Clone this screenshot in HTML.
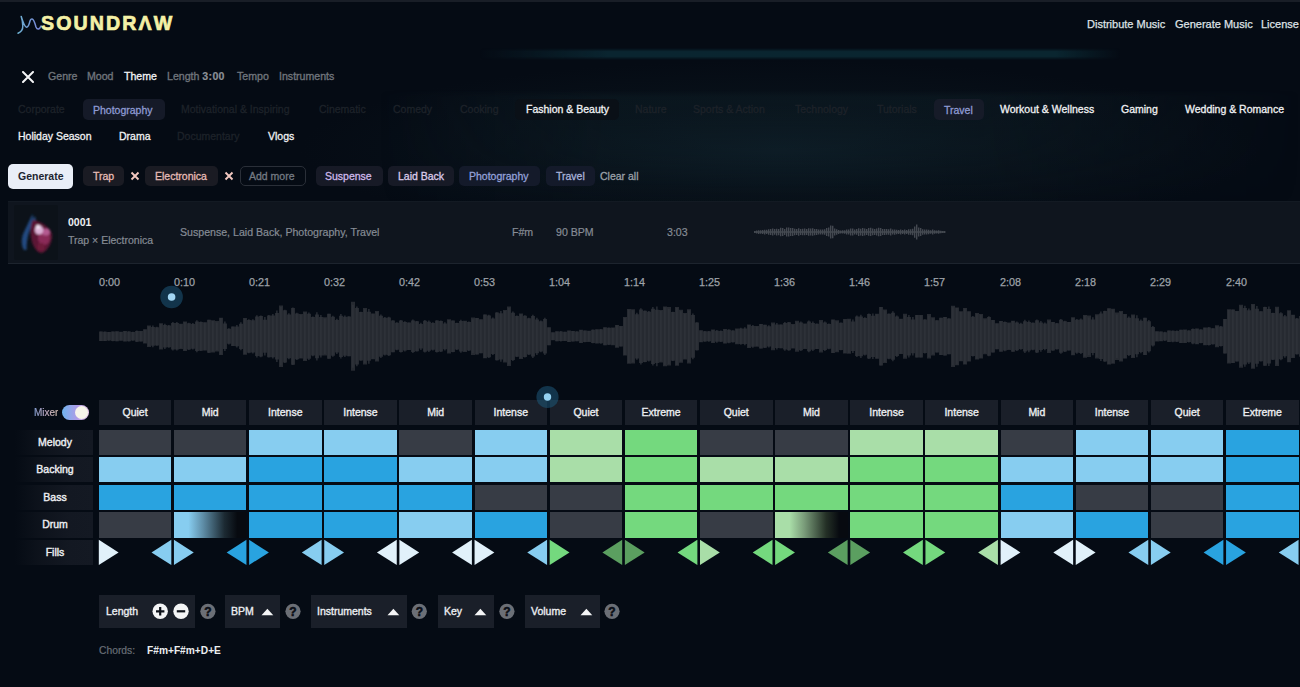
<!DOCTYPE html>
<html><head><meta charset="utf-8">
<style>
*{margin:0;padding:0;box-sizing:border-box}
html,body{width:1300px;height:687px;overflow:hidden;background:#050b14}
body{position:relative;font-family:"Liberation Sans",sans-serif;color:#e8eaee}
.a{position:absolute;white-space:nowrap;line-height:1}
.glow{position:absolute;left:0;top:0;width:1300px;height:687px;pointer-events:none}
.logo{left:41px;top:14.3px;font-size:19.6px;font-weight:bold;color:#f4f0a6;letter-spacing:2.1px;-webkit-text-stroke:0.7px #f4f0a6}
.nav{top:18.8px;font-size:11px;color:#dfe2e6;-webkit-text-stroke:0.25px #dfe2e6}
.tab{top:71px;font-size:10.6px;color:#6f747b;-webkit-text-stroke:0.35px #6f747b}
.tab.on{color:#f2f3f5;-webkit-text-stroke:0.3px #f2f3f5}
.th{top:104px;font-size:10.5px;-webkit-text-stroke:0.3px currentColor}
.th2{top:131px;font-size:10.5px;-webkit-text-stroke:0.3px currentColor}
.dim{color:#1d2229}
.wh{color:#f0f1f3}
.chipbg{position:absolute;border-radius:5px}
.ch{top:171px;font-size:10.5px;-webkit-text-stroke:0.3px currentColor}
.tl{top:276.5px;font-size:10.8px;color:#9ea2a8;-webkit-text-stroke:0.25px #9ea2a8}
.c{position:absolute}
.hd{position:absolute;top:399.7px;width:73px;height:25.2px;background:#1a1f29;color:#eceef1;font-size:10.5px;line-height:25px;text-align:center;-webkit-text-stroke:0.35px #eceef1}
.lbl{position:absolute;left:15px;width:78px;height:25.2px;background:linear-gradient(90deg,rgba(18,23,32,0) 0%,rgba(18,23,32,.6) 30%,#131822 70%,#141923 100%);padding-left:2px;color:#eceef1;font-size:10.5px;line-height:25px;text-align:center;-webkit-text-stroke:0.4px #eceef1}
.box{position:absolute;top:595px;height:33px;background:#1a1f29}
.bt{top:606px;font-size:10.5px;color:#eceef1;-webkit-text-stroke:0.35px #eceef1}
</style></head><body>
<div class="glow" style="background:radial-gradient(ellipse 480px 90px at 780px 150px,rgba(16,34,44,.75) 0%,rgba(12,24,32,.45) 50%,rgba(6,10,18,0) 100%)"></div>
<div style="position:absolute;left:380px;top:90px;width:920px;height:120px;background:linear-gradient(180deg,rgba(14,30,38,0) 0px,rgba(14,30,38,.45) 7px,rgba(14,30,38,.3) 60px,rgba(14,30,38,0) 120px);-webkit-mask-image:linear-gradient(90deg,transparent 0%,#000 25%,#000 65%,transparent 100%)"></div>
<svg class="glow" width="1300" height="687">
<defs>
<linearGradient id="gl" x1="0" x2="1"><stop offset="0" stop-color="#0a1f28" stop-opacity="0"/><stop offset="0.25" stop-color="#0b2630"/><stop offset="0.8" stop-color="#0b2630"/><stop offset="1" stop-color="#0a1f28" stop-opacity="0"/></linearGradient>
<radialGradient id="rg" cx="0.5" cy="0.5" r="0.5"><stop offset="0" stop-color="#0d1e27" stop-opacity="0.9"/><stop offset="1" stop-color="#060a12" stop-opacity="0"/></radialGradient>
<linearGradient id="wv" x1="0" x2="1"><stop offset="0" stop-color="#6cb0d0"/><stop offset="1" stop-color="#7a84d8"/></linearGradient>
<linearGradient id="tg" x1="0" x2="1"><stop offset="0" stop-color="#6fb6f0"/><stop offset="0.55" stop-color="#b59ae8"/><stop offset="1" stop-color="#e8c8e8"/></linearGradient>
</defs>
<filter id="gb" x="-20%" y="-200%" width="140%" height="500%"><feGaussianBlur stdDeviation="2.2"/></filter>
<filter id="gb2" x="-50%" y="-50%" width="200%" height="200%"><feGaussianBlur stdDeviation="25"/></filter>
</svg>

<div style="position:absolute;left:480px;top:48px;width:640px;height:12px;background:linear-gradient(90deg,rgba(10,37,48,0) 0%,rgba(10,37,48,.6) 12%,#0a2530 20%,#0a2630 90%,rgba(10,37,48,0) 100%);-webkit-mask-image:linear-gradient(180deg,transparent 0%,#000 30%,#000 70%,transparent 100%)"></div>
<div class="c" style="left:0;top:0;width:1300px;height:1.5px;background:#191e27"></div>
<!-- logo -->
<svg class="a" style="left:0;top:0" width="60" height="45">
<path d="M18 33.3 Q23 31 22.8 26 Q22.5 20 21.2 16.5 Q24.5 27 26.5 27.2 Q28.5 27.4 30 21 Q31 18.5 32.2 19 Q34 19.5 36 27 Q37 29.5 38.6 29 Q40 28.5 41 26" fill="none" stroke="url(#wv)" stroke-width="1.5" stroke-linecap="round" stroke-linejoin="round"/>
</svg>
<div class="a logo">SOUNDRΛW</div>

<div class="a nav" style="left:1087px">Distribute Music</div>
<div class="a nav" style="left:1175px">Generate Music</div>
<div class="a nav" style="left:1261px">License</div>

<!-- tabs -->
<svg class="a" style="left:22px;top:71px" width="12" height="12"><path d="M1 1L11 11M11 1L1 11" stroke="#f4f5f6" stroke-width="2" stroke-linecap="round"/></svg>
<div class="a tab" style="left:48px">Genre</div>
<div class="a tab" style="left:87px">Mood</div>
<div class="a tab on" style="left:124px">Theme</div>
<div class="a tab" style="left:167px">Length <b style="color:#8c9097;-webkit-text-stroke:0.2px #8c9097;letter-spacing:0.3px">3:00</b></div>
<div class="a tab" style="left:237px">Tempo</div>
<div class="a tab" style="left:279px">Instruments</div>

<!-- theme chips -->
<div class="chipbg" style="left:83px;top:99px;width:82px;height:21px;background:#151a28"></div>
<div class="chipbg" style="left:515px;top:99px;width:104px;height:21px;background:#0a1017"></div>
<div class="chipbg" style="left:934px;top:99px;width:50px;height:21px;background:#161b28"></div>
<div class="a th dim" style="left:18px">Corporate</div>
<div class="a th" style="left:93px;top:104.5px;color:#8e9ad2">Photography</div>
<div class="a th dim" style="left:181px">Motivational &amp; Inspiring</div>
<div class="a th dim" style="left:319px">Cinematic</div>
<div class="a th dim" style="left:393px">Comedy</div>
<div class="a th dim" style="left:460px">Cooking</div>
<div class="a th wh" style="left:526px">Fashion &amp; Beauty</div>
<div class="a th dim" style="left:635px">Nature</div>
<div class="a th dim" style="left:693px">Sports &amp; Action</div>
<div class="a th dim" style="left:795px">Technology</div>
<div class="a th dim" style="left:877px">Tutorials</div>
<div class="a th" style="left:944px;top:104.5px;color:#8e9ad2">Travel</div>
<div class="a th wh" style="left:1000px">Workout &amp; Wellness</div>
<div class="a th wh" style="left:1121px">Gaming</div>
<div class="a th wh" style="left:1185px">Wedding &amp; Romance</div>
<div class="a th2 wh" style="left:18px">Holiday Season</div>
<div class="a th2 wh" style="left:119px">Drama</div>
<div class="a th2 dim" style="left:177px">Documentary</div>
<div class="a th2 wh" style="left:268px">Vlogs</div>

<!-- chips -->
<div class="chipbg" style="left:8px;top:164px;width:65px;height:25px;background:#e9eef7;border-radius:5px"></div>
<div class="a ch" style="left:18px;color:#1c2430;font-weight:bold;-webkit-text-stroke:0">Generate</div>
<div class="chipbg" style="left:83px;top:166px;width:41px;height:20px;background:#1a1b23"></div>
<div class="a ch" style="left:93px;color:#e6bcb6">Trap</div>
<svg class="a" style="left:130px;top:171px" width="10" height="10"><path d="M1.5 1.5L8.5 8.5M8.5 1.5L1.5 8.5" stroke="#f2c8c0" stroke-width="1.9"/></svg>
<div class="chipbg" style="left:145px;top:166px;width:73px;height:20px;background:#1a1b23"></div>
<div class="a ch" style="left:155px;color:#e6bcb6">Electronica</div>
<svg class="a" style="left:224px;top:171px" width="10" height="10"><path d="M1.5 1.5L8.5 8.5M8.5 1.5L1.5 8.5" stroke="#f2c8c0" stroke-width="1.9"/></svg>
<div class="chipbg" style="left:240px;top:166px;width:66px;height:20px;border:1px solid #2a2f38"></div>
<div class="a ch" style="left:249px;color:#747a83">Add more</div>
<div class="chipbg" style="left:316px;top:166px;width:67px;height:20px;background:#171a26"></div>
<div class="a ch" style="left:325px;color:#cdb8ea">Suspense</div>
<div class="chipbg" style="left:388px;top:166px;width:66px;height:20px;background:#171a26"></div>
<div class="a ch" style="left:398px;color:#dccbea">Laid Back</div>
<div class="chipbg" style="left:459px;top:166px;width:81px;height:20px;background:#141a2a"></div>
<div class="a ch" style="left:469px;color:#93a0d8">Photography</div>
<div class="chipbg" style="left:546px;top:166px;width:49px;height:20px;background:#141a2a"></div>
<div class="a ch" style="left:556px;color:#a8b2da">Travel</div>
<div class="a ch" style="left:600px;color:#9aa0a8">Clear all</div>

<!-- track card -->
<div class="c" style="left:8px;top:201px;width:1292px;height:63px;background:#0f151e;border-top:1px solid #131a23;border-bottom:1px solid #1d242e"></div>
<div class="c" style="left:14px;top:205px;width:44px;height:55px;background:#0c1219;border-radius:2px"></div>
<svg class="a" style="left:14px;top:207px" width="50" height="50">
<defs><filter id="bl" x="-50%" y="-50%" width="200%" height="200%"><feGaussianBlur stdDeviation="1.3"/></filter></defs>
<g filter="url(#bl)">
<path d="M10 43 C6.5 37 7.5 29 10.5 24 C12.5 20 15.5 13 18.5 7 C19.5 13 17.5 19 15.5 24 C13.5 29 12.5 36 12.5 43Z" fill="#234a80"/>
<path d="M16.5 22 C17.5 17 19 12 21 9 C22 14 21.5 19 20 23Z" fill="#2c5592"/>
<path d="M19 13 C26 14 36 20 38 27 C39 34 34 44 28 46 C22 46 18 38 17 30 C16 22 17 16 19 13Z" fill="#5c1634"/>
<ellipse cx="30" cy="31" rx="6" ry="7" fill="#8a2c58"/>
<ellipse cx="32" cy="25" rx="4" ry="3.5" fill="#b45a90"/>
<ellipse cx="25" cy="23" rx="4.2" ry="4.5" fill="#dcb0d6"/>
<ellipse cx="24" cy="20" rx="2.2" ry="2.2" fill="#eee0f0"/>
<ellipse cx="27" cy="40" rx="4" ry="4" fill="#6e1a3a"/>
</g>
</svg>
<div class="a" style="left:68px;top:217px;font-size:10.5px;font-weight:bold;color:#eceef1">0001</div>
<div class="a" style="left:68px;top:234.5px;font-size:10.5px;color:#868c95;-webkit-text-stroke:0.2px #868c95">Trap × Electronica</div>
<div class="a" style="left:180px;top:226.5px;font-size:10.6px;color:#868c95;-webkit-text-stroke:0.2px #868c95">Suspense, Laid Back, Photography, Travel</div>
<div class="a" style="left:512px;top:226.5px;font-size:10.6px;color:#868c95;-webkit-text-stroke:0.2px #868c95">F#m</div>
<div class="a" style="left:556px;top:226.5px;font-size:10.6px;color:#868c95;-webkit-text-stroke:0.2px #868c95">90 BPM</div>
<div class="a" style="left:667px;top:226.5px;font-size:10.6px;color:#868c95;-webkit-text-stroke:0.2px #868c95">3:03</div>
<svg class="a" style="left:0;top:0" width="1300" height="687"><path d="M754 230.9h1.4v2.2h-1.4zM756 230.6h1.4v2.8h-1.4zM758 230.2h1.4v3.7h-1.4zM760 230.2h1.4v3.6h-1.4zM762 230.0h1.4v4.1h-1.4zM764 229.7h1.4v4.7h-1.4zM766 229.8h1.4v4.3h-1.4zM768 229.3h1.4v5.4h-1.4zM770 228.9h1.4v6.2h-1.4zM772 228.5h1.4v7.1h-1.4zM774 229.1h1.4v5.7h-1.4zM776 228.7h1.4v6.7h-1.4zM778 228.9h1.4v6.3h-1.4zM780 227.8h1.4v8.4h-1.4zM782 228.0h1.4v8.1h-1.4zM784 228.9h1.4v6.1h-1.4zM786 227.5h1.4v8.9h-1.4zM788 227.6h1.4v8.9h-1.4zM790 228.0h1.4v8.0h-1.4zM792 228.1h1.4v7.8h-1.4zM794 228.8h1.4v6.5h-1.4zM796 229.0h1.4v6.0h-1.4zM798 228.2h1.4v7.6h-1.4zM800 228.9h1.4v6.2h-1.4zM802 228.7h1.4v6.6h-1.4zM804 228.6h1.4v6.7h-1.4zM806 229.0h1.4v6.1h-1.4zM808 228.3h1.4v7.4h-1.4zM810 228.5h1.4v6.9h-1.4zM812 228.2h1.4v7.6h-1.4zM814 228.9h1.4v6.3h-1.4zM816 229.0h1.4v6.0h-1.4zM818 229.5h1.4v5.1h-1.4zM820 229.6h1.4v4.8h-1.4zM822 229.4h1.4v5.2h-1.4zM824 229.3h1.4v5.5h-1.4zM826 228.0h1.4v8.1h-1.4zM828 227.5h1.4v9.0h-1.4zM830 225.5h1.4v13.1h-1.4zM832 225.8h1.4v12.5h-1.4zM834 228.5h1.4v6.9h-1.4zM836 229.3h1.4v5.4h-1.4zM838 229.9h1.4v4.1h-1.4zM840 230.4h1.4v3.1h-1.4zM842 230.3h1.4v3.3h-1.4zM844 230.2h1.4v3.6h-1.4zM846 229.4h1.4v5.1h-1.4zM848 229.5h1.4v5.0h-1.4zM850 228.5h1.4v7.1h-1.4zM852 228.5h1.4v7.0h-1.4zM854 229.5h1.4v5.0h-1.4zM856 229.1h1.4v5.7h-1.4zM858 228.2h1.4v7.7h-1.4zM860 228.7h1.4v6.7h-1.4zM862 227.9h1.4v8.2h-1.4zM864 228.6h1.4v6.8h-1.4zM866 229.0h1.4v6.0h-1.4zM868 228.1h1.4v7.7h-1.4zM870 227.8h1.4v8.3h-1.4zM872 228.6h1.4v6.7h-1.4zM874 228.9h1.4v6.1h-1.4zM876 228.6h1.4v6.8h-1.4zM878 227.8h1.4v8.5h-1.4zM880 228.1h1.4v7.8h-1.4zM882 229.0h1.4v5.9h-1.4zM884 228.9h1.4v6.2h-1.4zM886 229.1h1.4v5.7h-1.4zM888 229.3h1.4v5.4h-1.4zM890 228.6h1.4v6.8h-1.4zM892 229.6h1.4v4.9h-1.4zM894 229.4h1.4v5.3h-1.4zM896 229.7h1.4v4.6h-1.4zM898 230.0h1.4v3.9h-1.4zM900 229.5h1.4v4.9h-1.4zM902 230.1h1.4v3.8h-1.4zM904 229.6h1.4v4.8h-1.4zM906 229.9h1.4v4.1h-1.4zM908 229.3h1.4v5.4h-1.4zM910 229.2h1.4v5.6h-1.4zM912 228.8h1.4v6.5h-1.4zM914 226.4h1.4v11.3h-1.4zM916 224.4h1.4v15.1h-1.4zM918 227.6h1.4v8.8h-1.4zM920 227.9h1.4v8.2h-1.4zM922 229.3h1.4v5.5h-1.4zM924 229.4h1.4v5.1h-1.4zM926 229.4h1.4v5.1h-1.4zM928 229.7h1.4v4.6h-1.4zM930 230.2h1.4v3.5h-1.4zM932 229.6h1.4v4.8h-1.4zM934 230.3h1.4v3.4h-1.4zM936 230.4h1.4v3.2h-1.4zM938 230.2h1.4v3.5h-1.4zM940 230.7h1.4v2.6h-1.4zM942 230.9h1.4v2.2h-1.4zM944 231.0h1.4v2.0h-1.4zM754 231.3h191v1.4h-191z" fill="#444951"/></svg>

<!-- timeline -->
<div class="a tl" style="left:99px">0:00</div>
<div class="a tl" style="left:174px">0:10</div>
<div class="a tl" style="left:249px">0:21</div>
<div class="a tl" style="left:324px">0:32</div>
<div class="a tl" style="left:399px">0:42</div>
<div class="a tl" style="left:474px">0:53</div>
<div class="a tl" style="left:549px">1:04</div>
<div class="a tl" style="left:624px">1:14</div>
<div class="a tl" style="left:699px">1:25</div>
<div class="a tl" style="left:774px">1:36</div>
<div class="a tl" style="left:849px">1:46</div>
<div class="a tl" style="left:924px">1:57</div>
<div class="a tl" style="left:1000px">2:08</div>
<div class="a tl" style="left:1075px">2:18</div>
<div class="a tl" style="left:1150px">2:29</div>
<div class="a tl" style="left:1226px">2:40</div>

<svg class="a" style="left:0;top:0" width="1300" height="687">
<path d="M99 331.4h4v9.7h-4zM103 331.7h4v9.2h-4zM107 332.1h4v8.4h-4zM111 331.6h4v9.4h-4zM115 331.3h4v9.9h-4zM119 331.8h4v9.0h-4zM123 331.0h4v10.6h-4zM127 331.4h4v9.9h-4zM131 332.1h4v8.3h-4zM135 330.9h4v10.9h-4zM139 330.9h4v10.7h-4zM143 329.2h4v14.3h-4zM147 325.5h4v21.5h-4zM151 327.0h4v18.7h-4zM155 327.2h4v18.2h-4zM159 323.2h4v26.2h-4zM163 325.1h4v22.4h-4zM167 325.4h4v21.8h-4zM171 323.1h4v26.5h-4zM175 322.9h4v26.7h-4zM179 323.7h4v25.2h-4zM183 321.6h4v29.3h-4zM187 323.2h4v26.3h-4zM191 324.0h4v24.7h-4zM195 321.5h4v29.6h-4zM199 321.9h4v28.8h-4zM203 322.2h4v28.3h-4zM207 319.8h4v32.9h-4zM211 320.2h4v32.2h-4zM215 321.0h4v30.6h-4zM219 317.8h4v37.1h-4zM223 323.5h4v25.6h-4zM227 328.7h4v15.1h-4zM231 326.6h4v19.4h-4zM235 326.5h4v19.7h-4zM239 323.8h4v25.1h-4zM243 317.9h4v36.9h-4zM247 319.9h4v32.8h-4zM251 320.2h4v32.2h-4zM255 316.6h4v39.4h-4zM259 316.1h4v40.4h-4zM263 319.8h4v33.0h-4zM267 315.4h4v41.8h-4zM271 315.4h4v41.8h-4zM275 313.1h4v46.4h-4zM279 305.5h4v61.6h-4zM283 310.2h4v52.3h-4zM287 314.5h4v43.7h-4zM291 307.9h4v56.8h-4zM295 313.4h4v45.9h-4zM299 313.9h4v44.7h-4zM303 311.6h4v49.5h-4zM307 313.7h4v45.1h-4zM311 316.9h4v38.7h-4zM315 314.4h4v43.8h-4zM319 317.0h4v38.6h-4zM323 317.3h4v38.1h-4zM327 313.8h4v45.0h-4zM331 316.7h4v39.1h-4zM335 320.1h4v32.4h-4zM339 315.7h4v41.2h-4zM343 316.7h4v39.1h-4zM347 316.4h4v39.8h-4zM351 301.7h4v69.1h-4zM355 308.1h4v56.3h-4zM359 312.0h4v48.6h-4zM363 307.9h4v56.7h-4zM367 311.7h4v49.1h-4zM371 313.4h4v45.9h-4zM375 311.1h4v50.4h-4zM379 315.8h4v41.0h-4zM383 317.8h4v37.0h-4zM387 317.4h4v37.8h-4zM391 320.5h4v31.7h-4zM395 322.8h4v26.9h-4zM399 320.5h4v31.6h-4zM403 322.1h4v28.3h-4zM407 322.6h4v27.3h-4zM411 320.6h4v31.3h-4zM415 321.3h4v29.9h-4zM419 324.1h4v24.4h-4zM423 320.7h4v31.1h-4zM427 321.7h4v29.1h-4zM431 322.9h4v26.8h-4zM435 320.5h4v31.6h-4zM439 321.1h4v30.3h-4zM443 323.5h4v25.7h-4zM447 319.3h4v34.1h-4zM451 320.6h4v31.3h-4zM455 323.1h4v26.3h-4zM459 320.9h4v30.7h-4zM463 320.7h4v31.2h-4zM467 322.1h4v28.4h-4zM471 317.5h4v37.5h-4zM475 318.1h4v36.4h-4zM479 319.3h4v33.9h-4zM483 314.5h4v43.7h-4zM487 315.5h4v41.7h-4zM491 318.6h4v35.4h-4zM495 312.4h4v47.8h-4zM499 313.2h4v46.2h-4zM503 309.9h4v52.7h-4zM507 306.6h4v59.3h-4zM511 312.8h4v47.1h-4zM515 315.9h4v40.8h-4zM519 313.6h4v45.4h-4zM523 315.7h4v41.2h-4zM527 318.2h4v36.3h-4zM531 316.1h4v40.4h-4zM535 319.4h4v33.8h-4zM539 321.2h4v30.2h-4zM543 319.1h4v34.5h-4zM547 327.3h4v17.9h-4zM551 332.3h4v8.0h-4zM555 331.2h4v10.1h-4zM559 331.5h4v9.6h-4zM563 331.7h4v9.2h-4zM567 330.4h4v11.7h-4zM571 331.1h4v10.3h-4zM575 331.4h4v9.9h-4zM579 329.7h4v13.2h-4zM583 330.4h4v11.7h-4zM587 330.7h4v11.3h-4zM591 329.7h4v13.2h-4zM595 329.2h4v14.2h-4zM599 329.3h4v14.0h-4zM603 327.3h4v18.0h-4zM607 327.8h4v16.9h-4zM611 327.4h4v17.8h-4zM615 324.9h4v22.8h-4zM619 326.0h4v20.5h-4zM623 317.0h4v38.6h-4zM627 309.0h4v54.7h-4zM631 309.2h4v54.2h-4zM635 314.2h4v44.2h-4zM639 309.6h4v53.4h-4zM643 310.7h4v51.2h-4zM647 311.7h4v49.1h-4zM651 308.8h4v55.1h-4zM655 309.7h4v53.2h-4zM659 310.0h4v52.5h-4zM663 306.4h4v59.8h-4zM667 306.9h4v58.7h-4zM671 312.0h4v48.7h-4zM675 306.9h4v58.9h-4zM679 309.8h4v52.9h-4zM683 313.0h4v46.5h-4zM687 309.3h4v54.1h-4zM691 314.9h4v42.8h-4zM695 322.5h4v27.7h-4zM699 330.3h4v11.9h-4zM703 331.3h4v10.1h-4zM707 331.3h4v9.9h-4zM711 329.6h4v13.4h-4zM715 330.8h4v11.0h-4zM719 330.9h4v10.9h-4zM723 329.1h4v14.3h-4zM727 329.8h4v12.9h-4zM731 330.4h4v11.8h-4zM735 328.4h4v15.9h-4zM739 328.6h4v15.4h-4zM743 328.5h4v15.6h-4zM747 324.5h4v23.6h-4zM751 326.0h4v20.7h-4zM755 325.9h4v20.9h-4zM759 323.9h4v24.7h-4zM763 324.8h4v23.0h-4zM767 326.3h4v20.1h-4zM771 322.4h4v27.9h-4zM775 324.4h4v23.7h-4zM779 324.5h4v23.7h-4zM783 323.0h4v26.5h-4zM787 322.3h4v28.0h-4zM791 324.1h4v24.5h-4zM795 320.7h4v31.1h-4zM799 322.4h4v27.8h-4zM803 323.6h4v25.5h-4zM807 321.4h4v29.8h-4zM811 322.9h4v26.8h-4zM815 323.7h4v25.3h-4zM819 320.1h4v32.4h-4zM823 322.5h4v27.5h-4zM827 323.9h4v24.9h-4zM831 319.6h4v33.4h-4zM835 320.3h4v31.9h-4zM839 322.7h4v27.2h-4zM843 319.0h4v34.6h-4zM847 318.8h4v35.0h-4zM851 321.5h4v29.6h-4zM855 316.5h4v39.5h-4zM859 316.4h4v39.9h-4zM863 317.9h4v36.9h-4zM867 314.1h4v44.4h-4zM871 315.8h4v41.1h-4zM875 313.8h4v44.9h-4zM879 307.1h4v58.5h-4zM883 309.4h4v53.7h-4zM887 313.8h4v45.0h-4zM891 312.8h4v46.9h-4zM895 316.6h4v39.5h-4zM899 318.7h4v35.2h-4zM903 313.8h4v45.0h-4zM907 317.0h4v38.6h-4zM911 319.4h4v33.9h-4zM915 315.1h4v42.3h-4zM919 315.0h4v42.6h-4zM923 319.6h4v33.4h-4zM927 314.1h4v44.4h-4zM931 317.2h4v38.2h-4zM935 320.2h4v32.3h-4zM939 317.7h4v37.2h-4zM943 317.0h4v38.5h-4zM947 318.4h4v35.9h-4zM951 305.7h4v61.3h-4zM955 307.5h4v57.7h-4zM959 311.3h4v50.0h-4zM963 307.9h4v56.7h-4zM967 311.2h4v50.3h-4zM971 316.8h4v39.1h-4zM975 313.0h4v46.5h-4zM979 314.1h4v44.3h-4zM983 318.2h4v36.1h-4zM987 316.9h4v38.8h-4zM991 320.1h4v32.4h-4zM995 323.2h4v26.1h-4zM999 321.0h4v30.7h-4zM1003 321.9h4v28.7h-4zM1007 322.4h4v27.7h-4zM1011 320.7h4v31.1h-4zM1015 322.4h4v27.8h-4zM1019 323.7h4v25.2h-4zM1023 321.3h4v30.1h-4zM1027 321.9h4v28.7h-4zM1031 322.8h4v27.0h-4zM1035 320.2h4v32.2h-4zM1039 322.5h4v27.6h-4zM1043 323.6h4v25.5h-4zM1047 319.6h4v33.5h-4zM1051 322.1h4v28.4h-4zM1055 323.3h4v25.9h-4zM1059 319.7h4v33.1h-4zM1063 321.2h4v30.2h-4zM1067 322.1h4v28.4h-4zM1071 317.3h4v38.0h-4zM1075 319.7h4v33.1h-4zM1079 319.6h4v33.5h-4zM1083 315.0h4v42.7h-4zM1087 315.5h4v41.5h-4zM1091 319.6h4v33.3h-4zM1095 314.2h4v44.2h-4zM1099 313.5h4v45.5h-4zM1103 311.0h4v50.6h-4zM1107 308.3h4v56.1h-4zM1111 308.8h4v54.9h-4zM1115 312.6h4v47.4h-4zM1119 311.1h4v50.3h-4zM1123 314.0h4v44.5h-4zM1127 317.7h4v37.2h-4zM1131 314.4h4v43.7h-4zM1135 318.3h4v36.0h-4zM1139 320.7h4v31.2h-4zM1143 317.7h4v37.3h-4zM1147 321.2h4v30.1h-4zM1151 327.0h4v18.6h-4zM1155 331.2h4v10.3h-4zM1159 331.4h4v9.8h-4zM1163 332.2h4v8.3h-4zM1167 330.5h4v11.6h-4zM1171 330.8h4v10.9h-4zM1175 330.9h4v10.9h-4zM1179 329.7h4v13.2h-4zM1183 329.5h4v13.5h-4zM1187 330.6h4v11.4h-4zM1191 328.9h4v14.7h-4zM1195 328.4h4v15.8h-4zM1199 329.5h4v13.5h-4zM1203 327.4h4v17.8h-4zM1207 327.6h4v17.5h-4zM1211 328.3h4v16.0h-4zM1215 325.3h4v22.0h-4zM1219 326.6h4v19.3h-4zM1223 319.1h4v34.4h-4zM1227 309.3h4v54.1h-4zM1231 309.6h4v53.3h-4zM1235 311.0h4v50.5h-4zM1239 304.8h4v63.0h-4zM1243 308.1h4v56.4h-4zM1247 310.2h4v52.2h-4zM1251 303.9h4v64.8h-4zM1255 308.8h4v54.9h-4zM1259 311.2h4v50.1h-4zM1263 307.0h4v58.7h-4zM1267 309.1h4v54.3h-4zM1271 312.9h4v46.9h-4zM1275 306.7h4v59.2h-4zM1279 313.3h4v45.9h-4zM1283 316.3h4v39.9h-4zM1287 310.3h4v52.0h-4zM1291 314.7h4v43.2h-4zM1295 318.5h4v35.7h-4zM1299 315.9h4v40.8h-4z" fill="#262a31"/><path d="M100.3 331.5h1.2v9.6h-1.2zM104.3 331.5h1.2v9.6h-1.2zM108.3 331.9h1.2v8.8h-1.2zM112.3 331.4h1.2v9.9h-1.2zM116.3 331.4h1.2v9.8h-1.2zM120.3 332.1h1.2v8.4h-1.2zM124.3 331.2h1.2v10.1h-1.2zM128.3 331.2h1.2v10.2h-1.2zM132.3 331.8h1.2v8.9h-1.2zM136.3 330.5h1.2v11.6h-1.2zM140.3 331.2h1.2v10.2h-1.2zM144.3 329.6h1.2v13.5h-1.2zM148.3 326.4h1.2v19.8h-1.2zM152.3 325.4h1.2v21.8h-1.2zM156.3 326.8h1.2v18.9h-1.2zM160.3 323.8h1.2v25.0h-1.2zM164.3 323.7h1.2v25.2h-1.2zM168.3 324.9h1.2v22.8h-1.2zM172.3 322.0h1.2v28.6h-1.2zM176.3 322.1h1.2v28.3h-1.2zM180.3 324.3h1.2v24.0h-1.2zM184.3 322.2h1.2v28.2h-1.2zM188.3 322.8h1.2v27.1h-1.2zM192.3 323.0h1.2v26.5h-1.2zM196.3 320.3h1.2v31.9h-1.2zM200.3 321.4h1.2v29.7h-1.2zM204.3 322.4h1.2v27.8h-1.2zM208.3 319.8h1.2v33.1h-1.2zM212.3 321.0h1.2v30.5h-1.2zM216.3 322.4h1.2v27.8h-1.2zM220.3 318.0h1.2v36.5h-1.2zM224.3 321.6h1.2v29.4h-1.2zM228.3 328.3h1.2v16.1h-1.2zM232.3 326.6h1.2v19.3h-1.2zM236.3 325.0h1.2v22.5h-1.2zM240.3 322.3h1.2v27.9h-1.2zM244.3 318.4h1.2v35.8h-1.2zM248.3 319.3h1.2v34.0h-1.2zM252.3 319.2h1.2v34.2h-1.2zM256.3 315.2h1.2v42.2h-1.2zM260.3 315.5h1.2v41.7h-1.2zM264.3 317.0h1.2v38.6h-1.2zM268.3 314.9h1.2v42.7h-1.2zM272.3 314.0h1.2v44.6h-1.2zM276.3 310.5h1.2v51.6h-1.2zM280.3 307.0h1.2v58.6h-1.2zM284.3 309.7h1.2v53.2h-1.2zM288.3 313.3h1.2v46.0h-1.2zM292.3 307.6h1.2v57.5h-1.2zM296.3 312.8h1.2v47.1h-1.2zM300.3 314.7h1.2v43.2h-1.2zM304.3 312.5h1.2v47.6h-1.2zM308.3 312.4h1.2v47.7h-1.2zM312.3 316.4h1.2v39.8h-1.2zM316.3 312.2h1.2v48.2h-1.2zM320.3 314.9h1.2v42.7h-1.2zM324.3 318.4h1.2v35.7h-1.2zM328.3 313.8h1.2v45.0h-1.2zM332.3 315.8h1.2v41.0h-1.2zM336.3 318.7h1.2v35.2h-1.2zM340.3 314.1h1.2v44.4h-1.2zM344.3 315.6h1.2v41.4h-1.2zM348.3 316.3h1.2v39.9h-1.2zM352.3 304.8h1.2v62.9h-1.2zM356.3 306.4h1.2v59.9h-1.2zM360.3 311.8h1.2v49.0h-1.2zM364.3 309.3h1.2v53.9h-1.2zM368.3 309.0h1.2v54.7h-1.2zM372.3 313.8h1.2v45.0h-1.2zM376.3 312.1h1.2v48.5h-1.2zM380.3 314.4h1.2v43.7h-1.2zM384.3 317.1h1.2v38.3h-1.2zM388.3 316.7h1.2v39.2h-1.2zM392.3 320.2h1.2v32.1h-1.2zM396.3 322.3h1.2v28.0h-1.2zM400.3 320.1h1.2v32.4h-1.2zM404.3 321.2h1.2v30.2h-1.2zM408.3 322.4h1.2v27.7h-1.2zM412.3 319.6h1.2v33.4h-1.2zM416.3 321.0h1.2v30.5h-1.2zM420.3 322.7h1.2v27.3h-1.2zM424.3 320.1h1.2v32.3h-1.2zM428.3 320.6h1.2v31.4h-1.2zM432.3 322.3h1.2v28.1h-1.2zM436.3 320.2h1.2v32.2h-1.2zM440.3 320.6h1.2v31.4h-1.2zM444.3 322.2h1.2v28.2h-1.2zM448.3 320.1h1.2v32.4h-1.2zM452.3 320.4h1.2v31.9h-1.2zM456.3 322.7h1.2v27.2h-1.2zM460.3 319.8h1.2v33.0h-1.2zM464.3 321.2h1.2v30.1h-1.2zM468.3 321.6h1.2v29.3h-1.2zM472.3 319.2h1.2v34.1h-1.2zM476.3 318.1h1.2v36.4h-1.2zM480.3 319.4h1.2v33.8h-1.2zM484.3 314.6h1.2v43.4h-1.2zM488.3 314.7h1.2v43.3h-1.2zM492.3 317.5h1.2v37.6h-1.2zM496.3 312.2h1.2v48.2h-1.2zM500.3 310.9h1.2v50.9h-1.2zM504.3 311.1h1.2v50.4h-1.2zM508.3 308.1h1.2v56.4h-1.2zM512.3 311.5h1.2v49.6h-1.2zM516.3 315.5h1.2v41.5h-1.2zM520.3 314.3h1.2v43.9h-1.2zM524.3 315.3h1.2v42.1h-1.2zM528.3 317.7h1.2v37.2h-1.2zM532.3 314.7h1.2v43.2h-1.2zM536.3 317.7h1.2v37.2h-1.2zM540.3 320.4h1.2v31.8h-1.2zM544.3 317.7h1.2v37.3h-1.2zM548.3 327.4h1.2v17.8h-1.2zM552.3 332.4h1.2v7.7h-1.2zM556.3 331.5h1.2v9.7h-1.2zM560.3 331.1h1.2v10.3h-1.2zM564.3 331.8h1.2v9.0h-1.2zM568.3 330.7h1.2v11.2h-1.2zM572.3 331.1h1.2v10.4h-1.2zM576.3 331.2h1.2v10.1h-1.2zM580.3 329.9h1.2v12.8h-1.2zM584.3 330.5h1.2v11.7h-1.2zM588.3 331.1h1.2v10.3h-1.2zM592.3 329.4h1.2v13.8h-1.2zM596.3 329.4h1.2v13.8h-1.2zM600.3 328.9h1.2v14.8h-1.2zM604.3 327.4h1.2v17.8h-1.2zM608.3 327.4h1.2v17.7h-1.2zM612.3 327.9h1.2v16.9h-1.2zM616.3 325.3h1.2v22.0h-1.2zM620.3 326.2h1.2v20.3h-1.2zM624.3 317.7h1.2v37.2h-1.2zM628.3 309.8h1.2v53.1h-1.2zM632.3 310.2h1.2v52.1h-1.2zM636.3 312.8h1.2v47.0h-1.2zM640.3 308.2h1.2v56.2h-1.2zM644.3 310.4h1.2v51.9h-1.2zM648.3 311.0h1.2v50.6h-1.2zM652.3 307.1h1.2v58.4h-1.2zM656.3 306.4h1.2v59.8h-1.2zM660.3 311.1h1.2v50.4h-1.2zM664.3 307.2h1.2v58.1h-1.2zM668.3 308.8h1.2v55.1h-1.2zM672.3 311.7h1.2v49.3h-1.2zM676.3 307.7h1.2v57.2h-1.2zM680.3 311.2h1.2v50.3h-1.2zM684.3 313.7h1.2v45.1h-1.2zM688.3 310.5h1.2v51.7h-1.2zM692.3 313.5h1.2v45.7h-1.2zM696.3 322.2h1.2v28.2h-1.2zM700.3 330.6h1.2v11.4h-1.2zM704.3 330.9h1.2v10.8h-1.2zM708.3 330.9h1.2v10.8h-1.2zM712.3 330.0h1.2v12.5h-1.2zM716.3 330.0h1.2v12.7h-1.2zM720.3 330.6h1.2v11.4h-1.2zM724.3 329.4h1.2v13.8h-1.2zM728.3 329.3h1.2v14.0h-1.2zM732.3 330.2h1.2v12.2h-1.2zM736.3 329.2h1.2v14.2h-1.2zM740.3 327.8h1.2v17.0h-1.2zM744.3 327.3h1.2v17.9h-1.2zM748.3 325.1h1.2v22.3h-1.2zM752.3 324.9h1.2v22.8h-1.2zM756.3 326.6h1.2v19.4h-1.2zM760.3 324.1h1.2v24.5h-1.2zM764.3 324.7h1.2v23.3h-1.2zM768.3 325.3h1.2v22.1h-1.2zM772.3 323.9h1.2v24.7h-1.2zM776.3 323.0h1.2v26.5h-1.2zM780.3 324.4h1.2v23.9h-1.2zM784.3 322.0h1.2v28.7h-1.2zM788.3 322.0h1.2v28.7h-1.2zM792.3 324.7h1.2v23.2h-1.2zM796.3 322.3h1.2v28.0h-1.2zM800.3 321.5h1.2v29.6h-1.2zM804.3 324.1h1.2v24.3h-1.2zM808.3 320.5h1.2v31.7h-1.2zM812.3 321.6h1.2v29.5h-1.2zM816.3 323.6h1.2v25.3h-1.2zM820.3 321.6h1.2v29.5h-1.2zM824.3 321.4h1.2v29.7h-1.2zM828.3 323.4h1.2v25.9h-1.2zM832.3 319.7h1.2v33.3h-1.2zM836.3 321.4h1.2v29.8h-1.2zM840.3 322.5h1.2v27.7h-1.2zM844.3 319.6h1.2v33.4h-1.2zM848.3 319.6h1.2v33.4h-1.2zM852.3 319.6h1.2v33.5h-1.2zM856.3 315.6h1.2v41.5h-1.2zM860.3 314.7h1.2v43.2h-1.2zM864.3 317.2h1.2v38.3h-1.2zM868.3 313.6h1.2v45.3h-1.2zM872.3 313.6h1.2v45.3h-1.2zM876.3 314.2h1.2v44.2h-1.2zM880.3 306.9h1.2v58.7h-1.2zM884.3 310.6h1.2v51.4h-1.2zM888.3 313.4h1.2v45.8h-1.2zM892.3 311.3h1.2v50.0h-1.2zM896.3 315.6h1.2v41.4h-1.2zM900.3 319.0h1.2v34.7h-1.2zM904.3 315.5h1.2v41.7h-1.2zM908.3 315.1h1.2v42.4h-1.2zM912.3 317.0h1.2v38.6h-1.2zM916.3 315.1h1.2v42.5h-1.2zM920.3 315.3h1.2v42.1h-1.2zM924.3 319.2h1.2v34.2h-1.2zM928.3 315.6h1.2v41.5h-1.2zM932.3 318.3h1.2v36.0h-1.2zM936.3 320.3h1.2v32.1h-1.2zM940.3 317.7h1.2v37.2h-1.2zM944.3 317.1h1.2v38.4h-1.2zM948.3 318.3h1.2v35.9h-1.2zM952.3 307.2h1.2v58.3h-1.2zM956.3 308.1h1.2v56.5h-1.2zM960.3 311.7h1.2v49.1h-1.2zM964.3 308.6h1.2v55.4h-1.2zM968.3 311.6h1.2v49.4h-1.2zM972.3 316.1h1.2v40.4h-1.2zM976.3 313.8h1.2v45.0h-1.2zM980.3 314.7h1.2v43.1h-1.2zM984.3 319.5h1.2v33.7h-1.2zM988.3 316.3h1.2v40.0h-1.2zM992.3 320.0h1.2v32.6h-1.2zM996.3 323.4h1.2v25.8h-1.2zM1000.3 321.1h1.2v30.3h-1.2zM1004.3 321.4h1.2v29.8h-1.2zM1008.3 323.3h1.2v25.9h-1.2zM1012.3 320.9h1.2v30.8h-1.2zM1016.3 321.6h1.2v29.4h-1.2zM1020.3 322.8h1.2v27.0h-1.2zM1024.3 319.7h1.2v33.3h-1.2zM1028.3 320.4h1.2v31.8h-1.2zM1032.3 322.5h1.2v27.7h-1.2zM1036.3 319.6h1.2v33.4h-1.2zM1040.3 320.9h1.2v30.8h-1.2zM1044.3 322.5h1.2v27.7h-1.2zM1048.3 321.1h1.2v30.4h-1.2zM1052.3 321.9h1.2v28.9h-1.2zM1056.3 323.1h1.2v26.4h-1.2zM1060.3 318.9h1.2v34.8h-1.2zM1064.3 320.8h1.2v31.1h-1.2zM1068.3 322.0h1.2v28.6h-1.2zM1072.3 317.8h1.2v37.0h-1.2zM1076.3 318.9h1.2v34.8h-1.2zM1080.3 318.6h1.2v35.5h-1.2zM1084.3 316.0h1.2v40.6h-1.2zM1088.3 317.5h1.2v37.6h-1.2zM1092.3 317.3h1.2v38.0h-1.2zM1096.3 315.6h1.2v41.5h-1.2zM1100.3 311.6h1.2v49.4h-1.2zM1104.3 310.7h1.2v51.1h-1.2zM1108.3 308.6h1.2v55.4h-1.2zM1112.3 309.6h1.2v53.4h-1.2zM1116.3 314.6h1.2v43.4h-1.2zM1120.3 312.1h1.2v48.4h-1.2zM1124.3 314.2h1.2v44.1h-1.2zM1128.3 316.6h1.2v39.3h-1.2zM1132.3 315.5h1.2v41.7h-1.2zM1136.3 315.2h1.2v42.1h-1.2zM1140.3 319.4h1.2v33.8h-1.2zM1144.3 317.7h1.2v37.2h-1.2zM1148.3 320.1h1.2v32.4h-1.2zM1152.3 326.0h1.2v20.5h-1.2zM1156.3 331.5h1.2v9.6h-1.2zM1160.3 331.6h1.2v9.3h-1.2zM1164.3 331.7h1.2v9.2h-1.2zM1168.3 330.6h1.2v11.5h-1.2zM1172.3 330.5h1.2v11.7h-1.2zM1176.3 330.6h1.2v11.4h-1.2zM1180.3 329.7h1.2v13.2h-1.2zM1184.3 329.9h1.2v12.9h-1.2zM1188.3 330.2h1.2v12.2h-1.2zM1192.3 328.4h1.2v15.9h-1.2zM1196.3 328.7h1.2v15.2h-1.2zM1200.3 329.3h1.2v14.0h-1.2zM1204.3 327.7h1.2v17.2h-1.2zM1208.3 327.1h1.2v18.4h-1.2zM1212.3 328.2h1.2v16.2h-1.2zM1216.3 326.4h1.2v19.8h-1.2zM1220.3 326.1h1.2v20.3h-1.2zM1224.3 319.1h1.2v34.4h-1.2zM1228.3 310.1h1.2v52.4h-1.2zM1232.3 309.6h1.2v53.4h-1.2zM1236.3 311.2h1.2v50.2h-1.2zM1240.3 306.3h1.2v60.0h-1.2zM1244.3 305.8h1.2v60.9h-1.2zM1248.3 308.5h1.2v55.5h-1.2zM1252.3 304.8h1.2v63.0h-1.2zM1256.3 305.9h1.2v60.9h-1.2zM1260.3 311.2h1.2v50.2h-1.2zM1264.3 306.8h1.2v59.0h-1.2zM1268.3 306.6h1.2v59.3h-1.2zM1272.3 312.7h1.2v47.3h-1.2zM1276.3 308.2h1.2v56.3h-1.2zM1280.3 312.2h1.2v48.1h-1.2zM1284.3 314.9h1.2v42.8h-1.2zM1288.3 310.8h1.2v51.1h-1.2zM1292.3 315.1h1.2v42.4h-1.2zM1296.3 318.0h1.2v36.6h-1.2zM1300.3 317.0h1.2v38.5h-1.2z" fill="#31353c"/>
<circle cx="171.6" cy="297" r="11.3" fill="#1e5878" fill-opacity="0.55"/>
<circle cx="171.6" cy="297" r="3.8" fill="#a2d6f4"/>
</svg>

<!-- mixer -->
<div class="a" style="left:34px;top:408px;font-size:10px;-webkit-text-stroke:0.2px rgba(200,190,200,.3);background:linear-gradient(90deg,#7f9ad0,#c0a8c0,#d8c0b0);-webkit-background-clip:text;color:transparent">Mixer</div>
<div class="c" style="left:62px;top:405px;width:27px;height:15px;border-radius:8px;background:linear-gradient(90deg,#6fb4ee,#b39ae6 60%,#e6c6e6)"></div>
<div class="c" style="left:75px;top:406px;width:13px;height:13px;border-radius:50%;background:#f6f4ea"></div>

<div class="hd" style="left:98.80px;width:72.5px">Quiet</div>
<div class="hd" style="left:173.95px;width:72.5px">Mid</div>
<div class="hd" style="left:249.10px;width:72.5px">Intense</div>
<div class="hd" style="left:324.25px;width:72.5px">Intense</div>
<div class="hd" style="left:399.40px;width:72.5px">Mid</div>
<div class="hd" style="left:474.55px;width:72.5px">Intense</div>
<div class="hd" style="left:549.70px;width:72.5px">Quiet</div>
<div class="hd" style="left:624.85px;width:72.5px">Extreme</div>
<div class="hd" style="left:700.00px;width:72.5px">Quiet</div>
<div class="hd" style="left:775.15px;width:72.5px">Mid</div>
<div class="hd" style="left:850.30px;width:72.5px">Intense</div>
<div class="hd" style="left:925.45px;width:72.5px">Intense</div>
<div class="hd" style="left:1000.60px;width:72.5px">Mid</div>
<div class="hd" style="left:1075.75px;width:72.5px">Intense</div>
<div class="hd" style="left:1150.90px;width:72.5px">Quiet</div>
<div class="hd" style="left:1226.05px;width:72.5px">Extreme</div>
<div class="c" style="left:98.80px;top:429.5px;width:72.5px;height:25.2px;background:#373c45"></div>
<div class="c" style="left:173.95px;top:429.5px;width:72.5px;height:25.2px;background:#373c45"></div>
<div class="c" style="left:249.10px;top:429.5px;width:72.5px;height:25.2px;background:#87cdf0"></div>
<div class="c" style="left:324.25px;top:429.5px;width:72.5px;height:25.2px;background:#87cdf0"></div>
<div class="c" style="left:399.40px;top:429.5px;width:72.5px;height:25.2px;background:#373c45"></div>
<div class="c" style="left:474.55px;top:429.5px;width:72.5px;height:25.2px;background:#87cdf0"></div>
<div class="c" style="left:549.70px;top:429.5px;width:72.5px;height:25.2px;background:#a9dea8"></div>
<div class="c" style="left:624.85px;top:429.5px;width:72.5px;height:25.2px;background:#74d97e"></div>
<div class="c" style="left:700.00px;top:429.5px;width:72.5px;height:25.2px;background:#373c45"></div>
<div class="c" style="left:775.15px;top:429.5px;width:72.5px;height:25.2px;background:#373c45"></div>
<div class="c" style="left:850.30px;top:429.5px;width:72.5px;height:25.2px;background:#a9dea8"></div>
<div class="c" style="left:925.45px;top:429.5px;width:72.5px;height:25.2px;background:#a9dea8"></div>
<div class="c" style="left:1000.60px;top:429.5px;width:72.5px;height:25.2px;background:#373c45"></div>
<div class="c" style="left:1075.75px;top:429.5px;width:72.5px;height:25.2px;background:#87cdf0"></div>
<div class="c" style="left:1150.90px;top:429.5px;width:72.5px;height:25.2px;background:#87cdf0"></div>
<div class="c" style="left:1226.05px;top:429.5px;width:72.5px;height:25.2px;background:#29a3e0"></div>
<div class="c" style="left:98.80px;top:457.2px;width:72.5px;height:25.2px;background:#87cdf0"></div>
<div class="c" style="left:173.95px;top:457.2px;width:72.5px;height:25.2px;background:#87cdf0"></div>
<div class="c" style="left:249.10px;top:457.2px;width:72.5px;height:25.2px;background:#29a3e0"></div>
<div class="c" style="left:324.25px;top:457.2px;width:72.5px;height:25.2px;background:#29a3e0"></div>
<div class="c" style="left:399.40px;top:457.2px;width:72.5px;height:25.2px;background:#87cdf0"></div>
<div class="c" style="left:474.55px;top:457.2px;width:72.5px;height:25.2px;background:#87cdf0"></div>
<div class="c" style="left:549.70px;top:457.2px;width:72.5px;height:25.2px;background:#a9dea8"></div>
<div class="c" style="left:624.85px;top:457.2px;width:72.5px;height:25.2px;background:#74d97e"></div>
<div class="c" style="left:700.00px;top:457.2px;width:72.5px;height:25.2px;background:#a9dea8"></div>
<div class="c" style="left:775.15px;top:457.2px;width:72.5px;height:25.2px;background:#a9dea8"></div>
<div class="c" style="left:850.30px;top:457.2px;width:72.5px;height:25.2px;background:#74d97e"></div>
<div class="c" style="left:925.45px;top:457.2px;width:72.5px;height:25.2px;background:#74d97e"></div>
<div class="c" style="left:1000.60px;top:457.2px;width:72.5px;height:25.2px;background:#87cdf0"></div>
<div class="c" style="left:1075.75px;top:457.2px;width:72.5px;height:25.2px;background:#87cdf0"></div>
<div class="c" style="left:1150.90px;top:457.2px;width:72.5px;height:25.2px;background:#87cdf0"></div>
<div class="c" style="left:1226.05px;top:457.2px;width:72.5px;height:25.2px;background:#29a3e0"></div>
<div class="c" style="left:98.80px;top:484.8px;width:72.5px;height:25.2px;background:#29a3e0"></div>
<div class="c" style="left:173.95px;top:484.8px;width:72.5px;height:25.2px;background:#29a3e0"></div>
<div class="c" style="left:249.10px;top:484.8px;width:72.5px;height:25.2px;background:#29a3e0"></div>
<div class="c" style="left:324.25px;top:484.8px;width:72.5px;height:25.2px;background:#29a3e0"></div>
<div class="c" style="left:399.40px;top:484.8px;width:72.5px;height:25.2px;background:#29a3e0"></div>
<div class="c" style="left:474.55px;top:484.8px;width:72.5px;height:25.2px;background:#373c45"></div>
<div class="c" style="left:549.70px;top:484.8px;width:72.5px;height:25.2px;background:#373c45"></div>
<div class="c" style="left:624.85px;top:484.8px;width:72.5px;height:25.2px;background:#74d97e"></div>
<div class="c" style="left:700.00px;top:484.8px;width:72.5px;height:25.2px;background:#74d97e"></div>
<div class="c" style="left:775.15px;top:484.8px;width:72.5px;height:25.2px;background:#74d97e"></div>
<div class="c" style="left:850.30px;top:484.8px;width:72.5px;height:25.2px;background:#74d97e"></div>
<div class="c" style="left:925.45px;top:484.8px;width:72.5px;height:25.2px;background:#74d97e"></div>
<div class="c" style="left:1000.60px;top:484.8px;width:72.5px;height:25.2px;background:#29a3e0"></div>
<div class="c" style="left:1075.75px;top:484.8px;width:72.5px;height:25.2px;background:#373c45"></div>
<div class="c" style="left:1150.90px;top:484.8px;width:72.5px;height:25.2px;background:#373c45"></div>
<div class="c" style="left:1226.05px;top:484.8px;width:72.5px;height:25.2px;background:#29a3e0"></div>
<div class="c" style="left:98.80px;top:512.4px;width:72.5px;height:25.2px;background:#373c45"></div>
<div class="c" style="left:173.95px;top:512.4px;width:72.5px;height:25.2px;background:linear-gradient(90deg,#87cdf0 0%,#87cdf0 20%,#5f8ea8 40%,#1c2a33 70%,#070a10 88%,#070a10 100%)"></div>
<div class="c" style="left:249.10px;top:512.4px;width:72.5px;height:25.2px;background:#29a3e0"></div>
<div class="c" style="left:324.25px;top:512.4px;width:72.5px;height:25.2px;background:#29a3e0"></div>
<div class="c" style="left:399.40px;top:512.4px;width:72.5px;height:25.2px;background:#87cdf0"></div>
<div class="c" style="left:474.55px;top:512.4px;width:72.5px;height:25.2px;background:#29a3e0"></div>
<div class="c" style="left:549.70px;top:512.4px;width:72.5px;height:25.2px;background:#373c45"></div>
<div class="c" style="left:624.85px;top:512.4px;width:72.5px;height:25.2px;background:#74d97e"></div>
<div class="c" style="left:700.00px;top:512.4px;width:72.5px;height:25.2px;background:#373c45"></div>
<div class="c" style="left:775.15px;top:512.4px;width:72.5px;height:25.2px;background:linear-gradient(90deg,#a9dea8 0%,#a9dea8 20%,#7a9c7a 40%,#243026 70%,#070a10 88%,#070a10 100%)"></div>
<div class="c" style="left:850.30px;top:512.4px;width:72.5px;height:25.2px;background:#74d97e"></div>
<div class="c" style="left:925.45px;top:512.4px;width:72.5px;height:25.2px;background:#74d97e"></div>
<div class="c" style="left:1000.60px;top:512.4px;width:72.5px;height:25.2px;background:#87cdf0"></div>
<div class="c" style="left:1075.75px;top:512.4px;width:72.5px;height:25.2px;background:#29a3e0"></div>
<div class="c" style="left:1150.90px;top:512.4px;width:72.5px;height:25.2px;background:#373c45"></div>
<div class="c" style="left:1226.05px;top:512.4px;width:72.5px;height:25.2px;background:#29a3e0"></div>
<div class="lbl" style="top:429.5px">Melody</div>
<div class="lbl" style="top:457.2px">Backing</div>
<div class="lbl" style="top:484.8px">Bass</div>
<div class="lbl" style="top:512.4px">Drum</div>
<div class="lbl" style="top:540px">Fills</div>
<svg class="a" style="left:0;top:0" width="1300" height="687">
<polygon points="98.80,539.8 98.80,565 118.60,552.4" fill="#e1f1fa"/>
<polygon points="171.30,539.8 171.30,565 151.50,552.4" fill="#87cdf0"/>
<polygon points="173.95,539.8 173.95,565 193.75,552.4" fill="#87cdf0"/>
<polygon points="246.45,539.8 246.45,565 226.65,552.4" fill="#29a3e0"/>
<polygon points="249.10,539.8 249.10,565 268.90,552.4" fill="#29a3e0"/>
<polygon points="321.60,539.8 321.60,565 301.80,552.4" fill="#87cdf0"/>
<polygon points="324.25,539.8 324.25,565 344.05,552.4" fill="#87cdf0"/>
<polygon points="396.75,539.8 396.75,565 376.95,552.4" fill="#e1f1fa"/>
<polygon points="399.40,539.8 399.40,565 419.20,552.4" fill="#e1f1fa"/>
<polygon points="471.90,539.8 471.90,565 452.10,552.4" fill="#e1f1fa"/>
<polygon points="474.55,539.8 474.55,565 494.35,552.4" fill="#e1f1fa"/>
<polygon points="547.05,539.8 547.05,565 527.25,552.4" fill="#87cdf0"/>
<polygon points="549.70,539.8 549.70,565 569.50,552.4" fill="#74d97e"/>
<polygon points="622.20,539.8 622.20,565 602.40,552.4" fill="#5b9f60"/>
<polygon points="624.85,539.8 624.85,565 644.65,552.4" fill="#5b9f60"/>
<polygon points="697.35,539.8 697.35,565 677.55,552.4" fill="#74d97e"/>
<polygon points="700.00,539.8 700.00,565 719.80,552.4" fill="#a9dea8"/>
<polygon points="772.50,539.8 772.50,565 752.70,552.4" fill="#74d97e"/>
<polygon points="775.15,539.8 775.15,565 794.95,552.4" fill="#74d97e"/>
<polygon points="847.65,539.8 847.65,565 827.85,552.4" fill="#5b9f60"/>
<polygon points="850.30,539.8 850.30,565 870.10,552.4" fill="#5b9f60"/>
<polygon points="922.80,539.8 922.80,565 903.00,552.4" fill="#74d97e"/>
<polygon points="925.45,539.8 925.45,565 945.25,552.4" fill="#74d97e"/>
<polygon points="997.95,539.8 997.95,565 978.15,552.4" fill="#a9dea8"/>
<polygon points="1000.60,539.8 1000.60,565 1020.40,552.4" fill="#e1f1fa"/>
<polygon points="1073.10,539.8 1073.10,565 1053.30,552.4" fill="#e1f1fa"/>
<polygon points="1075.75,539.8 1075.75,565 1095.55,552.4" fill="#e1f1fa"/>
<polygon points="1148.25,539.8 1148.25,565 1128.45,552.4" fill="#87cdf0"/>
<polygon points="1150.90,539.8 1150.90,565 1170.70,552.4" fill="#87cdf0"/>
<polygon points="1223.40,539.8 1223.40,565 1203.60,552.4" fill="#29a3e0"/>
<polygon points="1226.05,539.8 1226.05,565 1245.85,552.4" fill="#29a3e0"/>
<polygon points="1298.55,539.8 1298.55,565 1278.75,552.4" fill="#87cdf0"/>
<circle cx="547.5" cy="397" r="11.1" fill="#1e5878" fill-opacity="0.55"/>
<circle cx="547.5" cy="397" r="3.7" fill="#95d2f2"/>
</svg>

<!-- bottom controls -->
<div class="box" style="left:99px;width:96px"></div>
<div class="a bt" style="left:106px">Length</div>
<svg class="a" style="left:150px;top:601px" width="40" height="20">
<circle cx="10.2" cy="10.3" r="7.7" fill="#f4f5f6"/><path d="M6 10.3H14.4M10.2 6.1V14.5" stroke="#0e121a" stroke-width="2.2"/>
<circle cx="31" cy="10.3" r="7.7" fill="#f4f5f6"/><path d="M26.8 10.3H35.2" stroke="#0e121a" stroke-width="2.2"/>
</svg>
<div class="box" style="left:225px;width:55px"></div>
<div class="a bt" style="left:231px">BPM</div>
<div class="box" style="left:311px;width:96px"></div>
<div class="a bt" style="left:317px">Instruments</div>
<div class="box" style="left:438px;width:56px"></div>
<div class="a bt" style="left:444px">Key</div>
<div class="box" style="left:525px;width:75px"></div>
<div class="a bt" style="left:531px">Volume</div>
<svg class="a" style="left:0;top:0" width="1300" height="687">
<g fill="#f4f5f6">
<path d="M261.5 615.3L267.4 608.8L273.3 615.3Z"/>
<path d="M387.5 615.3L393.4 608.8L399.3 615.3Z"/>
<path d="M474.5 615.3L480.4 608.8L486.3 615.3Z"/>
<path d="M580.5 615.3L586.4 608.8L592.3 615.3Z"/>
</g>
<g>
<circle cx="207.9" cy="611.3" r="7.6" fill="#6b6f76"/>
<circle cx="293" cy="611.3" r="7.6" fill="#6b6f76"/>
<circle cx="419.3" cy="611.3" r="7.6" fill="#6b6f76"/>
<circle cx="506.9" cy="611.3" r="7.6" fill="#6b6f76"/>
<circle cx="612" cy="611.3" r="7.6" fill="#6b6f76"/>
</g>
<g font-family="Liberation Sans" font-weight="bold" font-size="12" fill="#0a0e16" stroke="#0a0e16" stroke-width="0.5" text-anchor="middle">
<text x="207.9" y="615.6">?</text><text x="293" y="615.6">?</text><text x="419.3" y="615.6">?</text><text x="506.9" y="615.6">?</text><text x="612" y="615.6">?</text>
</g>
</svg>
<div class="a" style="left:99px;top:645.5px;font-size:10.3px;color:#6a6f77;-webkit-text-stroke:0.2px #6a6f77">Chords:</div>
<div class="a" style="left:147px;top:645.5px;font-size:10.2px;font-weight:bold;color:#eceef1">F#m+F#m+D+E</div>
</body></html>
